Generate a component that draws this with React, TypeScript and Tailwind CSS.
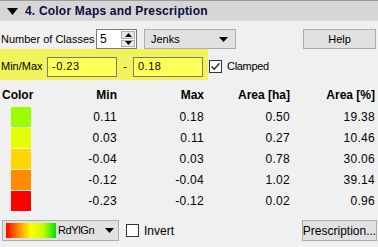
import React from "react";

const rows = [
  { c: "#99ff00", min: "0.11", max: "0.18", ha: "0.50", pct: "19.38" },
  { c: "#e3ff00", min: "0.03", max: "0.11", ha: "0.27", pct: "10.46" },
  { c: "#ffd700", min: "-0.04", max: "0.03", ha: "0.78", pct: "30.06" },
  { c: "#ff8c00", min: "-0.12", max: "-0.04", ha: "1.02", pct: "39.14" },
  { c: "#ff0000", min: "-0.23", max: "-0.12", ha: "0.02", pct: "0.96" },
];

function DownArrow() {
  return (
    <svg width="9" height="5" viewBox="0 0 9 5">
      <path d="M0 0H9L4.5 5Z" fill="#000" />
    </svg>
  );
}

function Check() {
  return (
    <svg width="11" height="11" viewBox="0 0 11 11">
      <path d="M1.5 5.5L4.2 8.3L9.5 2.2" fill="none" stroke="#222" strokeWidth="1.3" />
    </svg>
  );
}

export default function App() {
  return (
    <div
      className="w-[378px] h-[247px] bg-[#f0f0f0] overflow-hidden text-[11px] text-[#000] leading-none"
      style={{ fontFamily: '"Liberation Sans", Arial, sans-serif' }}
    >
      {/* header */}
      <div className="h-[21px] border-t border-[#9c9c9c] bg-[#d6d6d6] flex items-center">
        <svg width="11" height="7" viewBox="0 0 11 7" className="ml-[7px]">
          <path d="M0 0H11L5.5 7Z" fill="#000" />
        </svg>
        <span className="ml-[7px] font-bold text-[12px] tracking-[0.2px] text-[#0c0c40]">4. Color Maps and Prescription</span>
      </div>

      {/* row 1 */}
      <div className="mt-[8px] h-[20px] flex items-center">
        <span className="ml-[1px] w-[95px]">Number of Classes</span>
        <div className="w-[41px] h-[20px] bg-white border border-[#7a7a7a] flex items-center">
          <span className="ml-[3px] flex-1 text-[12px]">5</span>
          <div className="w-[14px] h-[16px] mr-[1px] flex flex-col gap-[1px]">
            <div className="flex-1 bg-[#e8e8e8] border border-[#b0b0b0] flex items-center justify-center">
              <svg width="7" height="4" viewBox="0 0 7 4"><path d="M0 4H7L3.5 0Z" fill="#000" /></svg>
            </div>
            <div className="flex-1 bg-[#e8e8e8] border border-[#b0b0b0] flex items-center justify-center">
              <svg width="7" height="4" viewBox="0 0 7 4"><path d="M0 0H7L3.5 4Z" fill="#000" /></svg>
            </div>
          </div>
        </div>
        <div className="ml-[7px] w-[92px] h-[20px] bg-[#e1e1e1] border border-[#adadad] flex items-center justify-between pl-[6px] pr-[7px]">
          <span>Jenks</span>
          <DownArrow />
        </div>
        <div className="ml-[67px] w-[73px] h-[20px] bg-[#e1e1e1] border border-[#adadad] flex items-center justify-center">
          Help
        </div>
      </div>

      {/* min/max */}
      <div className="h-[31px] flex items-center">
        <div className="w-[208px] h-[31px] bg-[#f2f25a] flex items-center pt-[4px]">
          <span className="ml-[1px] w-[46px]">Min/Max</span>
          <div className="w-[70px] h-[20px] bg-[#ffff5a] border border-[#7a7a7a] flex items-center px-[4px] tracking-[0.5px]">-0.23</div>
          <span className="w-[16px] text-center">-</span>
          <div className="w-[70px] h-[20px] bg-[#ffff5a] border border-[#7a7a7a] flex items-center px-[4px] tracking-[0.5px]">0.18</div>
        </div>
        <div className="ml-[1px] mt-[4px] w-[13px] h-[13px] bg-white border border-[#333] flex items-center justify-center">
          <Check />
        </div>
        <span className="ml-[5px] mt-[4px] tracking-[-0.3px]">Clamped</span>
      </div>

      {/* table */}
      <div className="mt-[7px] grid grid-cols-[32px_85px_87px_86px_85px] items-center font-bold text-[12px]">
        <div className="h-[16px] ml-[2px] flex items-center">Color</div>
        <div className="text-right">Min</div>
        <div className="text-right">Max</div>
        <div className="text-right">Area [ha]</div>
        <div className="text-right">Area [%]</div>
      </div>
      <div className="mt-[4px] flex flex-col gap-[1px] text-[12px] tracking-[0.3px]">
        {rows.map((r) => (
          <div key={r.pct} className="h-[20px] grid grid-cols-[32px_85px_87px_86px_85px] items-center">
            <div className="ml-[11px] w-[20px] h-[20px]" style={{ backgroundColor: r.c }} />
            <div className="text-right">{r.min}</div>
            <div className="text-right">{r.max}</div>
            <div className="text-right">{r.ha}</div>
            <div className="text-right">{r.pct}</div>
          </div>
        ))}
      </div>

      {/* bottom */}
      <div className="mt-[9px] h-[21px] flex items-center">
        <div className="ml-[2px] w-[117px] h-[21px] bg-[#e1e1e1] border border-[#adadad] flex items-center">
          <div
            className="ml-[3px] w-[50px] h-[15px]"
            style={{ background: "linear-gradient(to right, #ff0000, #ff8c00 25%, #ffff00 50%, #c0ff00 75%, #00e000)" }}
          />
          <span className="ml-[2px] flex-1 text-[11px] tracking-[-0.4px]">RdYlGn</span>
          <span className="mr-[4px]"><DownArrow /></span>
        </div>
        <div className="ml-[7px] w-[13px] h-[13px] bg-white border border-[#333]" />
        <span className="ml-[5px] text-[12px]">Invert</span>
        <div className="ml-auto mr-[1px] w-[75px] h-[21px] bg-[#e1e1e1] border border-[#adadad] flex items-center justify-center text-[12px]">
          Prescription...
        </div>
      </div>
    </div>
  );
}
